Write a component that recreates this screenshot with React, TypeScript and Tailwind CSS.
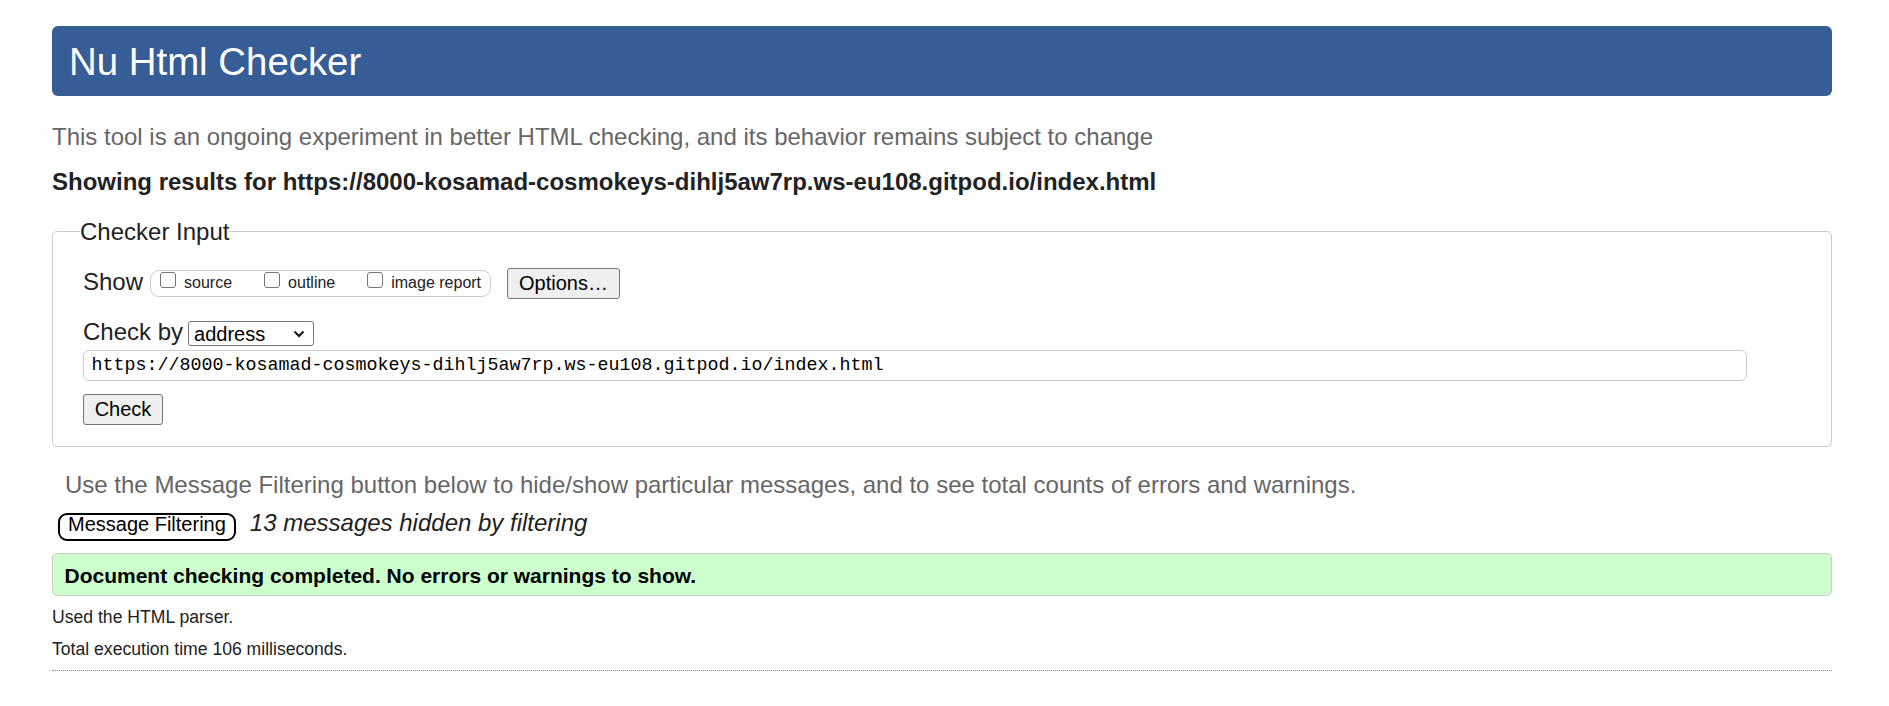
import React from "react";

const pageUrl = "https://8000-kosamad-cosmokeys-dihlj5aw7rp.ws-eu108.gitpod.io/index.html";

const showOptions = ["source", "outline", "image report"];

const Checkbox: React.FC<{ label: string }> = ({ label }) => (
  <label className="flex items-center">
    <input
      type="checkbox"
      className="mb-[6px] h-[16px] w-[16px] appearance-none rounded-[3px] border border-[#767676] bg-white"
    />
    <span className="ml-[8px] text-[16px] leading-[20px] text-[#222]">{label}</span>
  </label>
);

export default function App() {
  return (
    <div
      className="min-h-screen bg-white pt-[26px] pr-[57px] pl-[52px] text-[#222]"
      style={{ fontFamily: '"Liberation Sans", Arial, sans-serif' }}
    >
      <div className="flex h-[70px] items-center rounded-[6px] bg-[#365d95] pt-[2px] pl-[17px]">
        <h1 className="text-[38.4px] leading-none font-normal text-white">Nu Html Checker</h1>
      </div>

      <p className="mt-[27px] text-[24px] leading-[28px] text-[#666]">
        This tool is an ongoing experiment in better HTML checking, and its behavior remains subject to change
      </p>
      <p className="mt-[17px] text-[24px] leading-[28px] font-bold text-[#222]">
        Showing results for {pageUrl}
      </p>

      <fieldset className="mt-[21.5px] rounded-[5px] border border-[#cccccc] px-[30px] pt-[22px] pb-[21px]">
        <legend className="-ml-[3px] text-[24px] leading-[28px] text-[#222]">Checker Input</legend>

        <div className="flex h-[31px] items-center">
          <span className="mr-[7px] mb-[4px] text-[24px] leading-[27px]">Show</span>
          <div className="flex h-[27px] items-center gap-[32px] rounded-[9px] border border-[#cccccc] px-[9px]">
            {showOptions.map((o) => (
              <Checkbox key={o} label={o} />
            ))}
          </div>
          <button className="ml-[16px] h-[31px] rounded-[3px] border border-[#767676] bg-[#efefef] px-[11px] text-[20px] leading-[24px] text-black">
            Options…
          </button>
        </div>

        <div className="mt-[22.5px] flex h-[25px] items-center">
          <span className="mr-[5px] mb-[4px] text-[24px] leading-[27px]">Check by</span>
          <div className="flex h-[25px] w-[126px] items-center justify-between rounded-[3px] border border-[#767676] bg-white pr-[8px] pl-[5px]">
            <span className="text-[20px] leading-[22px] text-black">address</span>
            <svg width="12" height="8" viewBox="0 0 12 8" fill="none">
              <path d="M1.5 1.5 L6 6 L10.5 1.5" stroke="#111" strokeWidth="2" />
            </svg>
          </div>
        </div>

        <input
          type="text"
          readOnly
          value={pageUrl}
          className="mt-[4px] block h-[31px] w-[1664px] rounded-[6px] border border-[#cccccc] bg-white pl-[7.5px] text-[18.33px] text-black outline-none"
          style={{ fontFamily: '"Liberation Mono", "Courier New", monospace' }}
        />

        <button className="mt-[12.5px] block h-[31px] w-[80px] rounded-[3px] border border-[#767676] bg-[#efefef] text-[20px] leading-[24px] text-black">
          Check
        </button>
      </fieldset>

      <p className="mt-[24px] pl-[13px] text-[24px] leading-[28px] text-[#666]">
        Use the Message Filtering button below to hide/show particular messages, and to see total counts of errors and warnings.
      </p>

      <div className="mt-[14.5px] flex items-baseline">
        <button className="ml-[6px] h-[28px] rounded-[9px] border-2 border-black bg-white px-[8px] pt-0 pb-[5px] text-[20px] leading-[19px] text-black">
          Message Filtering
        </button>
        <span className="ml-[14px] text-[24px] leading-[20px] text-[#222] italic">13 messages hidden by filtering</span>
      </div>

      <div className="mt-[12px] flex h-[43px] items-center rounded-[5px] border border-[#cccccc] bg-[#ccffcc] pt-[2px] pl-[11.5px]">
        <p className="text-[21px] leading-[24px] font-bold text-black">
          Document checking completed. No errors or warnings to show.
        </p>
      </div>

      <p className="mt-[10px] text-[17.6px] leading-[22px] text-[#222]">Used the HTML parser.</p>
      <p className="mt-[10px] text-[17.6px] leading-[22px] text-[#222]">Total execution time 106 milliseconds.</p>
      <div className="mt-[10px] border-t border-dotted border-[#888]" />
    </div>
  );
}
